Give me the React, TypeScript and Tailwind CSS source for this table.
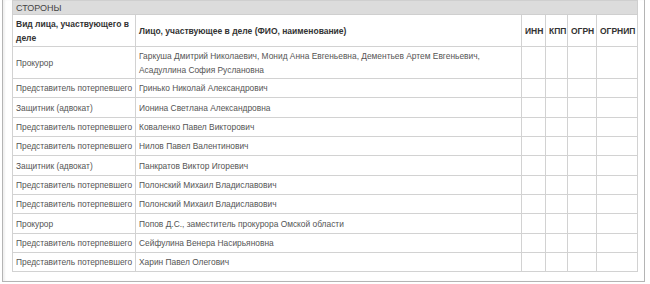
import { FC } from "react";

type Party = { role: string; name: string[] };

const parties: Party[] = [
  {
    role: "Прокурор",
    name: [
      "Гаркуша Дмитрий Николаевич, Монид Анна Евгеньевна, Дементьев Артем Евгеньевич,",
      "Асадуллина София Руслановна",
    ],
  },
  { role: "Представитель потерпевшего", name: ["Гринько Николай Александрович"] },
  { role: "Защитник (адвокат)", name: ["Ионина Светлана Александровна"] },
  { role: "Представитель потерпевшего", name: ["Коваленко Павел Викторович"] },
  { role: "Представитель потерпевшего", name: ["Нилов Павел Валентинович"] },
  { role: "Защитник (адвокат)", name: ["Панкратов Виктор Игоревич"] },
  { role: "Представитель потерпевшего", name: ["Полонский Михаил Владиславович"] },
  { role: "Представитель потерпевшего", name: ["Полонский Михаил Владиславович"] },
  { role: "Прокурор", name: ["Попов Д.С., заместитель прокурора Омской области"] },
  { role: "Представитель потерпевшего", name: ["Сейфулина Венера Насирьяновна"] },
  { role: "Представитель потерпевшего", name: ["Харин Павел Олегович"] },
];

// row heights taken from the screenshot
const rowHeights = [32, 19, 20, 19, 19, 20, 19, 19, 20, 19, 19];

const cell = "border border-[#d2d2d2] px-[3px] py-0 align-middle";

const App: FC = () => {
  return (
    <div
      className="w-[650px] h-[284px] bg-white overflow-hidden text-[#555] text-[8.4px] leading-[14px]"
      style={{ fontFamily: '"Liberation Sans", Arial, sans-serif' }}
    >
      <div className="ml-[2px] w-[643px] h-[282px] border-l border-r border-b border-[#b4b4b4] shadow-[inset_2px_0_2px_rgba(0,0,0,0.06)] pl-[9px] pr-[6px]">
        <table className="w-[625px] border-collapse table-fixed">
          <colgroup>
            <col className="w-[123px]" />
            <col className="w-[386px]" />
            <col className="w-[24px]" />
            <col className="w-[22px]" />
            <col className="w-[29px]" />
            <col className="w-[41px]" />
          </colgroup>
          <tbody>
            <tr className="h-[14px] bg-[#dcdcdc]">
              <td colSpan={6} className="border border-[#cfcfcf] px-[3px] text-[#444] text-[9px] leading-[12px]">
                СТОРОНЫ
              </td>
            </tr>
            <tr className="h-[32px] font-bold text-[#333] text-[8.5px]">
              <td className={cell}>
                Вид лица, участвующего в
                <br />
                деле
              </td>
              <td className={cell}>Лицо, участвующее в деле (ФИО, наименование)</td>
              <td className={cell + " text-center px-0"}>ИНН</td>
              <td className={cell + " text-center px-0"}>КПП</td>
              <td className={cell + " text-center px-0"}>ОГРН</td>
              <td className={cell + " text-center px-0"}>ОГРНИП</td>
            </tr>
            {parties.map((p, i) => (
              <tr key={i} style={{ height: rowHeights[i] }}>
                <td className={cell + " whitespace-nowrap"}>{p.role}</td>
                <td className={cell}>
                  {p.name.map((line, j) => (
                    <div key={j}>{line}</div>
                  ))}
                </td>
                <td className={cell} />
                <td className={cell} />
                <td className={cell} />
                <td className={cell} />
              </tr>
            ))}
          </tbody>
        </table>
      </div>
    </div>
  );
};

export default App;
